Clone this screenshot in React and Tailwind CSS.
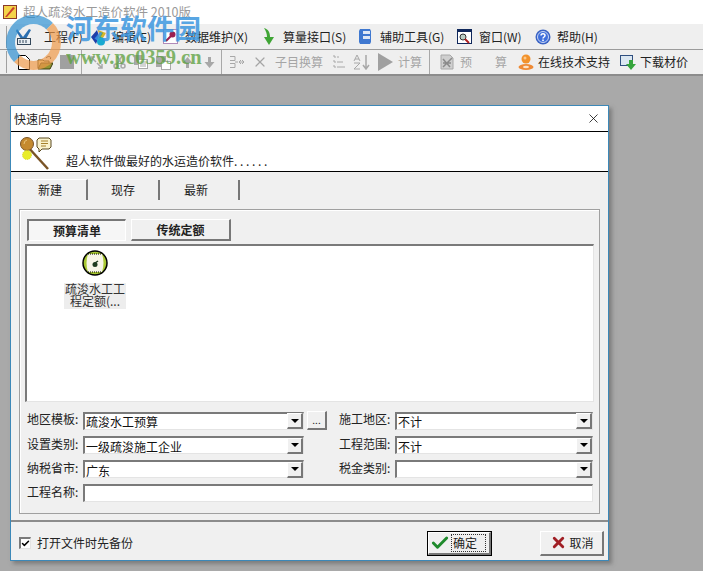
import React from 'react';
import { Check, X } from 'lucide-react';

const inset = 'border-t-2 border-l-2 border-t-[#7a7a7a] border-l-[#7a7a7a] border-b border-r border-b-[#e4e4e4] border-r-[#e4e4e4] bg-white';
const raised = 'border-t border-l border-t-white border-l-white border-b-2 border-r-2 border-b-[#777777] border-r-[#777777] bg-[#f0f0f0]';
const gray = '#a8a8a8';

const MenuItem = ({ icon, label, w, gap }) => (
    <div className={`flex items-center shrink-0 ${w} ${gap}`}>
        {icon}
        <span className='text-[12px] text-[#222222]'>{label}</span>
    </div>
);

const Combo = ({ value, w }) => (
    <div className={`${inset} ${w} h-[18px] flex items-center justify-between`}>
        <span className='text-[12px] pl-[1px] pt-[2px] leading-none text-[#111111]'>{value}</span>
        <div className={`${raised} w-[16px] h-[16px] flex items-center justify-center`}>
            <div className='w-0 h-0 border-x-[4px] border-x-transparent border-t-[4px] border-t-black'></div>
        </div>
    </div>
);

const Sep = ({ className }) => <div className={`w-px h-[24px] bg-[#a8a8a8] shrink-0 ${className}`}></div>;
const Grip = ({ h }) => <div className={`w-[2px] ${h} border-l border-[#a0a0a0] shrink-0`}></div>;

export default function App() {
    return (
        <div className='relative w-[703px] h-[571px] overflow-hidden bg-[#a9a9a9] flex flex-col font-["Noto_Sans_CJK_SC",sans-serif]'>
            {/* title */}
            <div className='h-[24px] bg-white flex items-center pl-[3px] gap-[6px]'>
                <svg width='14' height='14' viewBox='0 0 14 14'>
                    <rect x='0.5' y='0.5' width='13' height='13' fill='#f4d44a' stroke='#8a3a2a' />
                    <path d='M2 12 L10 2 L12 3 L4 12Z' fill='#c9402a' />
                </svg>
                <span className='text-[12.5px] text-[#9a9a9a]'>超人疏浚水工造价软件 2010版</span>
            </div>

            {/* menu */}
            <div className='h-[26px] bg-[#efefef] flex items-center pl-[6px] border-b border-[#9b9b9b]'>
                <Grip h='h-[22px]' />
                <div className='w-[7px] shrink-0'></div>
                <MenuItem w='w-[75px]' gap='gap-[11px]' label='工程(F)' icon={
                    <svg width='18' height='18' viewBox='0 0 18 18'>
                        <path d='M2 1l6 8 6-8 2 1-5 9H6L1 3z' fill='#2b6fb0' />
                        <rect x='2.5' y='10.5' width='13' height='6' fill='#e8eef2' stroke='#33475a' />
                        <path d='M5 12v3M8 12v3M11 12v3' stroke='#33475a' />
                    </svg>
                } />
                <MenuItem w='w-[73px]' gap='gap-[4px]' label='编辑(E)' icon={
                    <svg width='18' height='18' viewBox='0 0 18 18'>
                        <path d='M1 9l6-7 2 6-3 8z' fill='#1f3fa8' />
                        <path d='M8 2l8 3-3 5-4-2z' fill='#d9b52a' />
                        <path d='M9 8l4 2-2 3-3-1z' fill='#3da14a' />
                        <circle cx='11' cy='13.5' r='4' fill='#19a9d0' />
                    </svg>
                } />
                <MenuItem w='w-[100px]' gap='gap-[7px]' label='数据维护(X)' icon={
                    <svg width='15' height='15' viewBox='0 0 15 15'>
                        <rect x='0.5' y='0.5' width='14' height='14' fill='white' stroke='#6a1f7a' strokeDasharray='1 1' />
                        <circle cx='9.5' cy='5.5' r='3' fill='#9c1f50' />
                        <path d='M8 7L3 12' stroke='#9c1f50' strokeWidth='2' />
                    </svg>
                } />
                <MenuItem w='w-[95px]' gap='gap-[8px]' label='算量接口(S)' icon={
                    <svg width='12' height='17' viewBox='0 0 12 17'>
                        <path d='M1 0c4 1 6 4 6 9h4l-5 8-5-8h3c0-3-1-6-3-9z' fill='#3fa535' />
                    </svg>
                } />
                <MenuItem w='w-[99px]' gap='gap-[8px]' label='辅助工具(G)' icon={
                    <svg width='14' height='17' viewBox='0 0 14 17'>
                        <path d='M2 1h10l1 2v11l-1 2H2l-1-2V3z' fill='#3f78d0' />
                        <rect x='5' y='3' width='7' height='3' fill='#dfe8f5' />
                        <rect x='5' y='8' width='7' height='3' fill='#dfe8f5' />
                    </svg>
                } />
                <MenuItem w='w-[78px]' gap='gap-[7px]' label='窗口(W)' icon={
                    <svg width='15' height='15' viewBox='0 0 15 15'>
                        <rect x='0.5' y='0.5' width='14' height='14' fill='white' stroke='#10285c' />
                        <rect x='0' y='0' width='15' height='3' fill='#10285c' />
                        <circle cx='6' cy='8' r='3' fill='#bcd0c6' stroke='#333333' />
                        <path d='M8 10l4 4' stroke='#b02020' strokeWidth='2' />
                    </svg>
                } />
                <MenuItem w='w-[70px]' gap='gap-[6px]' label='帮助(H)' icon={
                    <svg width='16' height='16' viewBox='0 0 16 16'>
                        <circle cx='8' cy='8' r='7.5' fill='#3a63c4' />
                        <circle cx='8' cy='8' r='5.5' fill='#3f6fdc' stroke='#c8d6f5' />
                        <path d='M6 6.5c0-2.5 4-2.5 4 0 0 1.5-2 1.5-2 3' fill='none' stroke='white' strokeWidth='1.5' />
                        <rect x='7.2' y='10.5' width='1.6' height='1.6' fill='white' />
                    </svg>
                } />
            </div>

            {/* toolbar */}
            <div className='h-[26px] bg-[#efefef] flex items-center pl-[6px] border-b-2 border-[#8c8c8c]'>
                <Grip h='h-[22px]' />
                <svg width='12' height='15' viewBox='0 0 12 15' className='ml-[10px] shrink-0'>
                    <path d='M0.5 0.5h7l4 4v10h-11z' fill='white' stroke='black' />
                </svg>
                <svg width='16' height='15' viewBox='0 0 16 15' className='ml-[7px] shrink-0'>
                    <path d='M1 5h5l1 1h5v7H1z' fill='#e8d79a' stroke='#3c3c10' />
                    <path d='M1 14l3-6h12l-3 6z' fill='#8f9330' stroke='#3c3c10' />
                    <path d='M9 3c2-2 4-2 5 0l-1 1' fill='none' stroke='#333333' />
                </svg>
                <div className='ml-[7px] w-[14px] h-[14px] bg-[#a0a0a0] shrink-0'></div>
                <Sep className='ml-[7px]' />
                <svg width='13' height='13' viewBox='0 0 13 13' className='ml-[8px] shrink-0' fill='none' stroke={gray} strokeWidth='1.5'>
                    <path d='M1 5V1h4M1 1l5 5M12 8v4H8M12 12L7 7' />
                </svg>
                <svg width='13' height='13' viewBox='0 0 13 13' className='ml-[10px] shrink-0' fill='none' stroke={gray} strokeWidth='1.5'>
                    <circle cx='3' cy='10' r='2' /><circle cx='10' cy='10' r='2' /><path d='M4 8l5-8M9 8L4 0' />
                </svg>
                <svg width='14' height='14' viewBox='0 0 14 14' className='ml-[8px] shrink-0'>
                    <rect x='0' y='0' width='8' height='10' fill={gray} /><rect x='4.5' y='4.5' width='9' height='9' fill='white' stroke={gray} />
                    <path d='M6 7h6M6 9h6M6 11h6' stroke={gray} />
                </svg>
                <svg width='15' height='15' viewBox='0 0 15 15' className='ml-[8px] shrink-0'>
                    <rect x='0' y='1' width='10' height='11' fill={gray} /><rect x='5.5' y='6.5' width='9' height='8' fill='white' stroke={gray} />
                </svg>
                <svg width='13' height='13' viewBox='0 0 13 13' className='ml-[10px] shrink-0' fill={gray}>
                    <path d='M6.5 1l5 6H8v5H5V7H1.5z' />
                </svg>
                <svg width='13' height='13' viewBox='0 0 13 13' className='ml-[9px] shrink-0' fill={gray}>
                    <path d='M6.5 12l5-6H8V1H5v5H1.5z' />
                </svg>
                <Sep className='ml-[5px]' />
                <svg width='16' height='16' viewBox='0 0 16 16' className='ml-[7px] shrink-0' stroke={gray} fill='none'>
                    <path d='M1 2.5h5v4H1M1 9.5h5v4H1M6 8h3M10 8h5M12 6l-2 2 2 2M13 6l2 2-2 2' />
                </svg>
                <X size={16} strokeWidth={1.8} className='ml-[7px] text-[#a5a5a5] shrink-0' />
                <span className='ml-[7px] text-[12px] text-[#a5a5a5] shrink-0'>子目换算</span>
                <svg width='14' height='16' viewBox='0 0 14 16' className='ml-[9px] shrink-0' stroke={gray} fill='none'>
                    <path d='M2 1v2M2 6v2M2 11v2M5 3h2M5 8h6M5 13h8M2 3h2M2 8h2M2 13h2' />
                </svg>
                <svg width='8' height='16' viewBox='0 0 8 16' className='ml-[7px] shrink-0' stroke={gray} fill='none'>
                    <path d='M1 7l3-6 3 6M2 5h4M1 9h6l-6 6h6' />
                </svg>
                <svg width='8' height='15' viewBox='0 0 8 15' className='ml-[1px] mr-[5px] shrink-0' stroke={gray} fill='none' strokeWidth='1.5'>
                    <path d='M4 0v13M1 10l3 4 3-4' />
                </svg>
                <svg width='15' height='18' viewBox='0 0 15 18' className='ml-[3px] shrink-0' fill='#a0a0a0'>
                    <path d='M0 0l15 9-15 9z' />
                </svg>
                <span className='ml-[5px] text-[12px] text-[#a5a5a5] shrink-0'>计算</span>
                <Sep className='ml-[7px]' />
                <svg width='16' height='16' viewBox='0 0 16 16' className='ml-[9px] shrink-0'>
                    <path d='M2 1h9l3 3v11H2z' fill='#cfcfcf' stroke={gray} />
                    <path d='M4 13L13 4M4 5l7 8M4 9h8' stroke='#8a8a8a' strokeWidth='1.5' />
                </svg>
                <span className='ml-[5px] text-[12px] text-[#a5a5a5] shrink-0'>预</span>
                <span className='ml-[23px] text-[12px] text-[#a5a5a5] shrink-0'>算</span>
                <svg width='16' height='16' viewBox='0 0 16 16' className='ml-[11px] shrink-0'>
                    <ellipse cx='8' cy='13' rx='7.5' ry='3' fill='#ee8a35' />
                    <ellipse cx='8' cy='13' rx='3' ry='1.2' fill='#fbe3c8' />
                    <circle cx='8' cy='5' r='4.5' fill='#f2922c' />
                    <circle cx='7' cy='4' r='1.5' fill='#fbc98a' />
                </svg>
                <span className='ml-[4px] text-[12px] text-[#222222] shrink-0'>在线技术支持</span>
                <svg width='16' height='16' viewBox='0 0 16 16' className='ml-[10px] shrink-0'>
                    <rect x='0.5' y='1.5' width='12' height='10' fill='#dbe7f1' stroke='#2f4f80' />
                    <path d='M9 6h4v4h3l-5 6-5-6h3z' fill='#36a53c' />
                </svg>
                <span className='ml-[4px] text-[12px] text-[#222222] shrink-0'>下载材价</span>
            </div>

            {/* workspace */}
            <div className='flex-1 pl-[10px] pt-[29px]'>
                <div className='w-[599px] h-[456px] border border-[#3c88b8] bg-[#f0f0f0] flex flex-col shadow-[3px_3px_4px_rgba(90,90,90,0.55)]'>
                    <div className='h-[26px] shrink-0 bg-white flex items-center pl-[3px] justify-between border-b border-black'>
                        <span className='text-[12px] text-[#222222]'>快速向导</span>
                        <X size={15} strokeWidth={1.2} className='mr-[7px] text-black' />
                    </div>
                    <div className='h-[40px] shrink-0 bg-white border-b border-black flex items-end pl-[7px]'>
                        <svg width='34' height='34' viewBox='0 0 34 34' className='mb-[1px]'>
                            <path d='M9 10 L30 33' stroke='#7a5426' strokeWidth='2.5' />
                            <circle cx='9' cy='8' r='6.5' fill='#c58a2e' stroke='#7a5426' />
                            <path d='M6 8a4 4 0 0 1 3-4' stroke='#e9c37a' fill='none' />
                            <circle cx='9' cy='19' r='4.5' fill='#e9ec2a' stroke='#d7d91e' strokeDasharray='1 1' />
                            <path d='M21 2h10l2 2v7l-2 2h-7l-3 3v-3l-2-2V4z' fill='#f9f2cc' stroke='#5b4a20' />
                            <path d='M23 5h7M23 7.5h7M23 10h5' stroke='#a5802a' />
                        </svg>
                        <span className='ml-[14px] text-[12px] text-[#222222] leading-[20px]'>超人软件做最好的水运造价软件. . . . . .</span>
                    </div>

                    {/* tabs */}
                    <div className='flex h-[28px] shrink-0 pl-[3px] items-end'>
                        <div className='w-[74px] h-[21px] bg-[#f0f0f0] border-t border-white border-r-2 border-r-[#777777] flex items-center justify-center text-[12px] text-[#222222]'>新建</div>
                        <div className='w-[72px] h-[20px] border-r-2 border-r-[#777777] flex items-center justify-center text-[12px] text-[#222222]'>现存</div>
                        <div className='w-[80px] h-[20px] border-r-2 border-r-[#777777] flex items-center justify-center pr-[6px] text-[12px] text-[#222222]'>最新</div>
                    </div>

                    {/* panel */}
                    <div className='mt-[9px] ml-[8px] mr-[8px] h-[305px] shrink-0 border border-[#a0a0a0] shadow-[inset_1px_1px_0_#ffffff] flex flex-col px-[5px]'>
                        <div className='flex mt-[9px] ml-[2px] gap-[5px]'>
                            <div className='w-[99px] h-[22px] border-t-2 border-l-2 border-t-[#777777] border-l-[#777777] border-b border-r border-b-white border-r-white bg-[#f6f6f6] flex items-center justify-center text-[12px] font-bold text-[#222222]'>预算清单</div>
                            <div className={`${raised} w-[100px] h-[22px] flex items-center justify-center text-[12px] font-bold text-[#222222]`}>传统定额</div>
                        </div>
                        <div className={`${inset} mt-[3px] h-[158px] w-[569px] pt-[4px] pl-[37px]`}>
                            <div className='w-[62px] flex flex-col items-center'>
                                <svg width='26' height='26' viewBox='0 0 26 26'>
                                    <circle cx='13' cy='13' r='12' fill='#a8c832' stroke='black' strokeWidth='1.5' />
                                    <path d='M6 4h14c2 6 2 12 0 18H6C4 16 4 10 6 4z' fill='#f7f5e6' />
                                    <path d='M6 4h14M6 22h14' stroke='black' strokeDasharray='1 1' />
                                    <circle cx='13' cy='14.5' r='2.5' fill='#1d3a1d' />
                                    <path d='M13 13l3-2' stroke='#1d3a1d' strokeWidth='1.5' />
                                </svg>
                                <div className='mt-[7px] bg-[#ededed] text-[12px] leading-[12px] text-[#333333] text-center w-[62px] pb-[2px]'>疏浚水工工<br />程定额(...</div>
                            </div>
                        </div>

                        {/* form */}
                        <div className='mt-[9px] grid grid-cols-[58px_221px_23px_12px_56px_198px] gap-y-[6px] items-center text-[12px] text-[#222222] leading-none w-[568px]'>
                            <span className='pl-[2px] mb-[3px]'>地区模板:</span>
                            <Combo w='w-[221px]' value='疏浚水工预算' />
                            <div className={`${raised} ml-[3px] w-[20px] h-[19px] flex items-center justify-center text-[10px] leading-none`}>...</div>
                            <span></span>
                            <span className='mb-[3px] whitespace-nowrap'>施工地区:</span>
                            <Combo w='w-[198px]' value='不计' />

                            <span className='pl-[2px] mb-[3px]'>设置类别:</span>
                            <Combo w='w-[221px]' value='一级疏浚施工企业' />
                            <span></span>
                            <span></span>
                            <span className='mb-[3px] whitespace-nowrap'>工程范围:</span>
                            <Combo w='w-[198px]' value='不计' />

                            <span className='pl-[2px] mb-[3px]'>纳税省市:</span>
                            <Combo w='w-[221px]' value='广东' />
                            <span></span>
                            <span></span>
                            <span className='mb-[3px] whitespace-nowrap'>税金类别:</span>
                            <Combo w='w-[198px]' value='' />

                            <span className='pl-[2px] mb-[3px]'>工程名称:</span>
                            <div className={`${inset} col-span-5 h-[18px] w-[510px]`}></div>
                        </div>
                    </div>

                    {/* footer */}
                    <div className='mt-[6px] flex-1 border-t-2 border-[#8c8c8c] flex items-center pl-[8px] pt-[4px]'>
                        <div className={`${inset} w-[12px] h-[12px] flex items-center justify-center`}>
                            <Check size={9} strokeWidth={4} className='text-black' />
                        </div>
                        <span className='ml-[6px] text-[12px] text-[#222222]'>打开文件时先备份</span>
                        <div className='ml-[294px] w-[65px] h-[25px] border border-black flex shrink-0'>
                            <div className={`${raised} flex-1 flex items-center justify-center pr-[2px]`}>
                                <Check size={20} strokeWidth={3.5} className='text-[#1f8a2c]' />
                                <span className='ml-[1px] text-[12px] leading-[16px] text-[#222222] border border-dotted border-[#333333] pl-[1px] pr-[8px]'>确定</span>
                            </div>
                        </div>
                        <div className={`${raised} ml-[48px] w-[64px] h-[25px] flex items-center justify-center gap-[3px] shrink-0`}>
                            <X size={17} strokeWidth={4} className='text-[#a01f25]' />
                            <span className='text-[12px] text-[#222222]'>取消</span>
                        </div>
                    </div>
                </div>
            </div>

            {/* watermark */}
            <div className='absolute left-[6px] top-[15px] w-[55px] h-[55px] rounded-full border-[9px] border-[#2f8fd0] border-r-[#ef9a4a] border-b-[#ef9a4a] opacity-70'></div>
            <div className='absolute left-[66px] top-[12px] text-[27px] leading-[32px] font-bold text-[#3d97df] opacity-85 whitespace-nowrap'>河东软件园</div>
            <div className='absolute left-[66px] top-[47px] text-[20.5px] leading-[20px] font-bold text-[#5aa03c] opacity-75 whitespace-nowrap font-["Liberation_Serif",serif]'>www.pc0359.cn</div>
        </div>
    );
}
